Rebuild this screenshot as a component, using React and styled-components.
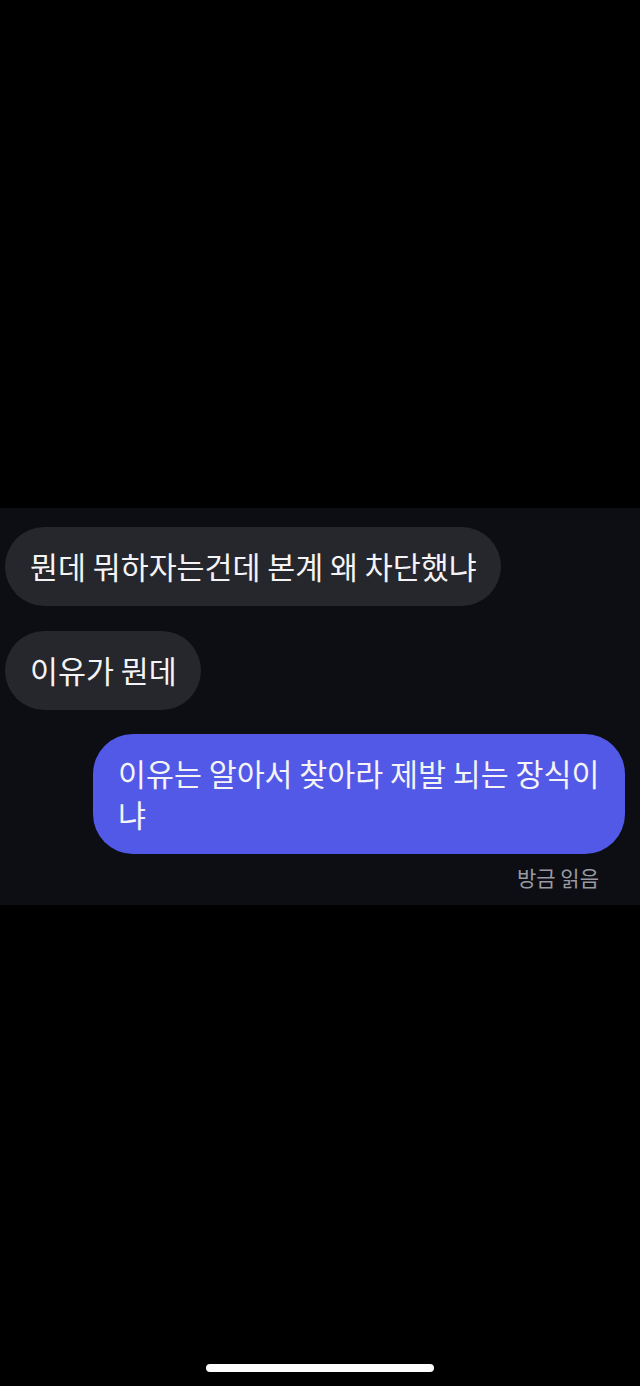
import React from "react";
import styled, { createGlobalStyle } from "styled-components";

const Global = createGlobalStyle`
  html, body { margin: 0; padding: 0; background: #000; }
  body { font-family: "Noto Sans CJK KR", "Noto Sans", sans-serif; }
  * { box-sizing: border-box; }
`;

const Screen = styled.div`
  width: 640px;
  height: 1386px;
  background: #000;
  display: flex;
  flex-direction: column;
`;

const TopSpace = styled.div`
  height: 508px;
  flex: none;
`;

const ChatPanel = styled.section`
  background: #0c0e14;
  height: 397px;
  flex: none;
  padding: 19px 15px 0 5px;
  display: flex;
  flex-direction: column;
`;

const Row = styled.div`
  display: flex;
  justify-content: ${(p) => (p.$mine ? "flex-end" : "flex-start")};
  margin-bottom: ${(p) => p.$gap}px;
`;

const Bubble = styled.div`
  max-width: 532px;
  padding: 19px 24px 19px 25px;
  border-radius: 40px;
  background: ${(p) => (p.$mine ? "#5259e7" : "#26272c")};
  color: #f4f4f6;
  font-size: 30.4px;
  line-height: 41px;
  font-weight: 400;
  letter-spacing: 0;
  word-break: normal;
`;

const ReadMark = styled.div`
  align-self: flex-end;
  margin-right: 26px;
  margin-top: 10px;
  color: #9a9aa0;
  font-size: 21px;
  line-height: 26px;
`;

const Filler = styled.div`
  flex: 1;
  display: flex;
  align-items: flex-end;
  justify-content: center;
  padding-bottom: 14px;
`;

const HomeIndicator = styled.div`
  width: 228px;
  height: 8px;
  border-radius: 4px;
  background: #fff;
`;

export default function App() {
  return (
    <Screen>
      <Global />
      <TopSpace />
      <ChatPanel>
        <Row $gap={25}>
          <Bubble>뭔데 뭐하자는건데 본계 왜 차단했냐</Bubble>
        </Row>
        <Row $gap={24}>
          <Bubble>이유가 뭔데</Bubble>
        </Row>
        <Row $mine $gap={0}>
          <Bubble $mine>이유는 알아서 찾아라 제발 뇌는 장식이냐</Bubble>
        </Row>
        <ReadMark>방금 읽음</ReadMark>
      </ChatPanel>
      <Filler>
        <HomeIndicator />
      </Filler>
    </Screen>
  );
}
